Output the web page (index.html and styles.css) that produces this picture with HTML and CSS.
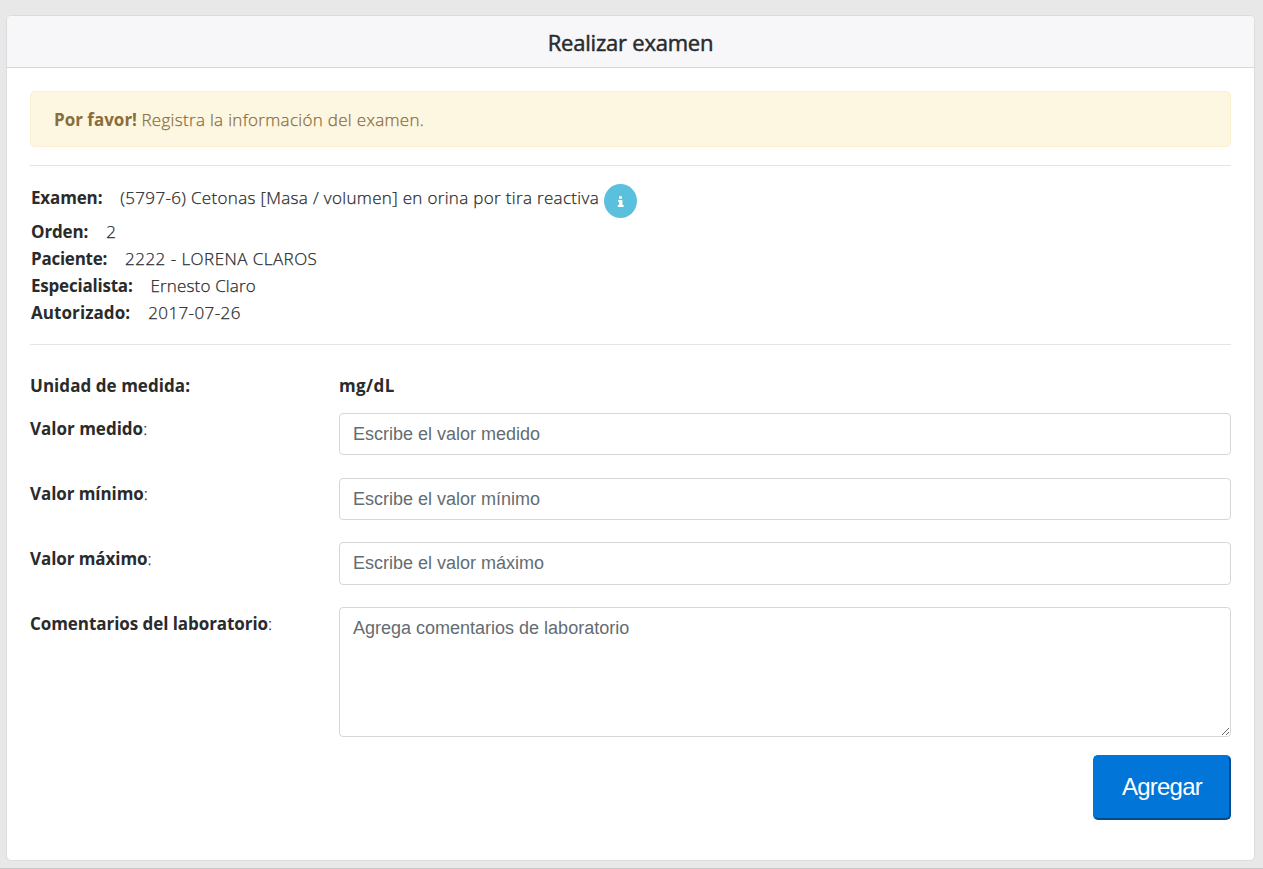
FILE: index.html
```html
<!DOCTYPE html>
<html lang="es">
<head>
<meta charset="utf-8">
<title>Realizar examen</title>
<link rel="stylesheet" href="styles.css">
</head>
<body>
<main class="card">
  <header class="card-header"><h1 class="card-title">Realizar examen</h1></header>
  <div class="card-body">
    <div class="alert"><strong class="alert-lead">Por favor!</strong> <span class="alert-text">Registra la información del examen.</span></div>
    <dl class="details">
      <div class="detail detail-exam"><dt class="k-exam">Examen:</dt><dd class="v-exam">(5797-6) Cetonas [Masa / volumen] en orina por tira reactiva</dd>
        <svg class="info" viewBox="0 0 33 34"><ellipse cx="16.5" cy="17" rx="16.5" ry="17" fill="#5bc0de"/><path fill="#fff" d="M15 12.2h3v2.6h-3zM14 15.9h4.4v5.2h1.2v2h-5.8v-2h1.3v-3.3h-1.1z"/></svg>
      </div>
      <div class="detail"><dt class="k-order">Orden:</dt><dd>2</dd></div>
      <div class="detail"><dt class="k-patient">Paciente:</dt><dd class="v-patient">2222 - LORENA CLAROS</dd></div>
      <div class="detail"><dt class="k-spec">Especialista:</dt><dd class="v-spec">Ernesto Claro</dd></div>
      <div class="detail"><dt class="k-auth">Autorizado:</dt><dd class="v-auth">2017-07-26</dd></div>
    </dl>
    <form class="form">
      <div class="row row-unit"><div class="label l-unit"><b>Unidad de medida:</b></div><div class="label l-mg"><b>mg/dL</b></div></div>
      <div class="row"><label class="label l-med" for="med"><b>Valor medido</b>:</label><input class="control" id="med" placeholder="Escribe el valor medido"></div>
      <div class="row"><label class="label l-min" for="min"><b>Valor mínimo</b>:</label><input class="control" id="min" placeholder="Escribe el valor mínimo"></div>
      <div class="row row-max"><label class="label l-max" for="max"><b>Valor máximo</b>:</label><input class="control" id="max" placeholder="Escribe el valor máximo"></div>
      <div class="row row-comments"><label class="label l-com" for="com"><b>Comentarios del laboratorio</b>:</label><textarea class="control control-area" id="com" placeholder="Agrega comentarios de laboratorio"></textarea></div>
      <div class="actions"><button class="submit" type="button">Agregar</button></div>
    </form>
  </div>
</main>
</body>
</html>
```

FILE: styles.css
```css
* { box-sizing: border-box; }
body {
  margin: 0;
  height: 869px;
  padding: 15px 8px 7px 6px;
  border-bottom: 1px solid #c8c8c8;
  background: #e8e8e8;
  color: #292b2c;
  font: 300 17px/27px "Open Sans", "Noto Sans", sans-serif;
  -webkit-text-stroke: .25px;
  overflow: hidden;
}
.card {
  height: 846px;
  background: #fff;
  border: 1px solid #dcdcdc;
  border-radius: 5px;
}
.card-header {
  height: 52px;
  background: #f7f7f9;
  border-bottom: 1px solid #d5d7d9;
  border-radius: 4px 4px 0 0;
  display: flex;
  justify-content: center;
  align-items: center;
}
.card-title {
  margin: 0;
  padding-top: 2px;
  font-size: 22px;
  font-weight: 400;
  letter-spacing: -.22px;
  -webkit-text-stroke: .5px;
}
.card-body { padding: 23px 23px 0; }
.alert {
  height: 56px;
  padding: 14px 23px;
  background: #fdf7e2;
  border: 1px solid #faf0d0;
  border-radius: 5px;
  color: #8a6d3b;
  white-space: nowrap;
}
.alert-text { letter-spacing: .31px; }
strong, b, dt { font-weight: 700; -webkit-text-stroke: 0; }
.details {
  height: 180px;
  margin: 18px 0 0;
  padding: 18px 1px 0;
  border: solid #e3e4e5;
  border-width: 1px 0;
}
.detail { display: flex; gap: 18px; height: 27px; white-space: nowrap; }
.detail-exam { height: 34px; }
dd { margin: 0; }
.k-exam { letter-spacing: -.15px; }
.v-exam { letter-spacing: .33px; }
.k-order { letter-spacing: -.15px; }
.k-patient { letter-spacing: -.25px; }
.v-patient { letter-spacing: .46px; }
.k-spec { letter-spacing: -.21px; }
.v-spec { letter-spacing: .15px; }
.k-auth { letter-spacing: .07px; }
.v-auth { letter-spacing: .4px; }
.info { width: 33px; height: 34px; margin-left: -13px; -webkit-text-stroke: 0; }
.form { padding-top: 27px; }
.row { display: grid; grid-template-columns: 309px 1fr; height: 65px; align-items: start; }
.row-unit { height: 41px; }
.row-max { height: 64px; }
.row-max .control { height: 43px; margin-top: -1px; padding-bottom: 1px; }
.row-comments { height: 142px; }
.label { padding-top: 2px; white-space: nowrap; }
.row-unit .label { padding-top: 0; }
.row-comments .label { padding-top: 3px; }
.l-unit { letter-spacing: .05px; }
.l-mg { letter-spacing: .4px; }
.l-min, .l-max { letter-spacing: -.07px; }
.l-com { letter-spacing: -.06px; }
.control {
  width: 100%;
  height: 42px;
  padding: 0 13px;
  border: 1px solid #d5d7d8;
  border-radius: 4px;
  background: #fff;
  font: 400 18px/26px "Liberation Sans", Arial, sans-serif;
  -webkit-text-stroke: 0;
}
.control::placeholder { color: #636c72; opacity: 1; }
.control-area { display: block; height: 130px; padding-top: 7px; resize: vertical; }
.actions { display: flex; justify-content: flex-end; padding-top: 6px; }
.submit {
  width: 138px;
  height: 65px;
  padding: 0 0 2px;
  border: 2px solid;
  border-color: #0275d8 #014c8c #014c8c #0275d8;
  border-radius: 5px;
  background: #0275d8;
  color: #fff;
  font: 400 24px/30px "Liberation Sans", Arial, sans-serif;
  letter-spacing: -.8px;
  -webkit-text-stroke: 0;
}
```
